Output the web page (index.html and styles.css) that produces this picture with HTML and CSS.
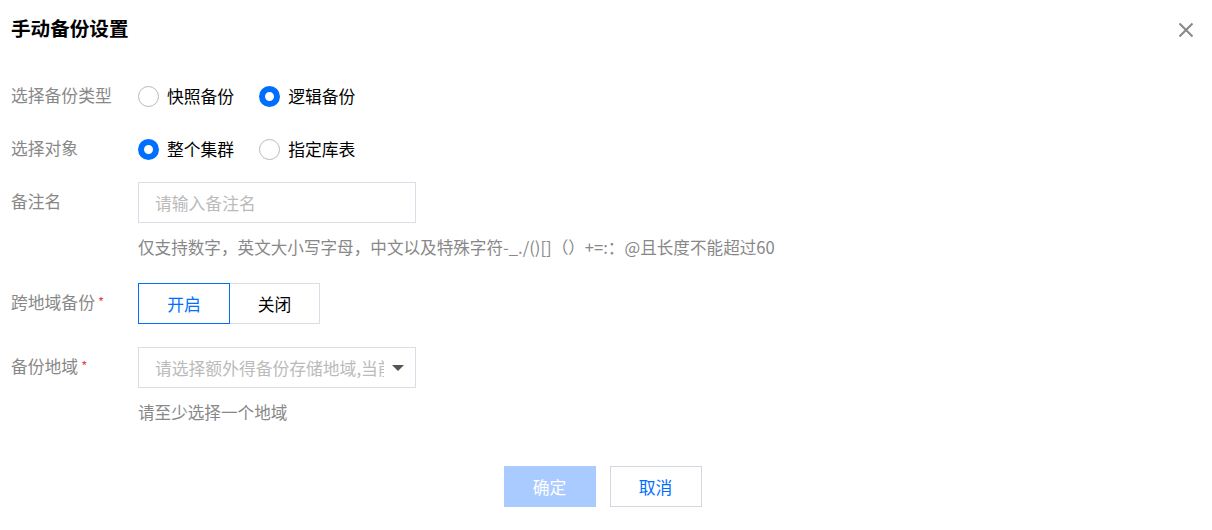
FILE: index.html
```html
<!DOCTYPE html>
<html lang="zh-CN">
<head>
<meta charset="utf-8">
<title>手动备份设置</title>
<link rel="stylesheet" href="styles.css">
</head>
<body>
<div class="dialog">
  <div class="header">
    <h1 class="title">手动备份设置</h1>
    <button class="close" aria-label="关闭">
      <svg width="16" height="16" viewBox="0 0 16 16"><path d="M1.5 1.5 L14.5 14.5 M14.5 1.5 L1.5 14.5" stroke="#888" stroke-width="2" fill="none"/></svg>
    </button>
  </div>
  <div class="form">
    <div class="item">
      <div class="label">选择备份类型</div>
      <div class="control">
        <label class="radio"><span class="dot"></span><span class="rtext">快照备份</span></label>
        <label class="radio checked"><span class="dot"></span><span class="rtext">逻辑备份</span></label>
      </div>
    </div>
    <div class="item">
      <div class="label">选择对象</div>
      <div class="control">
        <label class="radio checked"><span class="dot"></span><span class="rtext">整个集群</span></label>
        <label class="radio"><span class="dot"></span><span class="rtext">指定库表</span></label>
      </div>
    </div>
    <div class="item item-help item-gap">
      <div class="label">备注名</div>
      <div class="col">
        <div class="control">
          <div class="input"><span class="placeholder">请输入备注名</span></div>
        </div>
        <div class="help">仅支持数字，英文大小写字母，中文以及特殊字符-_./()[]（）+=:：@且长度不能超过60</div>
      </div>
    </div>
    <div class="item item-seg">
      <div class="label">跨地域备份<span class="req">*</span></div>
      <div class="control">
        <div class="seg">
          <span class="seg-btn active">开启</span>
          <span class="seg-btn">关闭</span>
        </div>
      </div>
    </div>
    <div class="item item-help item-last">
      <div class="label">备份地域<span class="req">*</span></div>
      <div class="col">
        <div class="control">
          <div class="select"><span class="placeholder clip">请选择额外得备份存储地域,当前地域</span><span class="caret"></span></div>
        </div>
        <div class="help">请至少选择一个地域</div>
      </div>
    </div>
  </div>
  <div class="footer">
    <button class="btn primary disabled">确定</button>
    <button class="btn">取消</button>
  </div>
</div>
</body>
</html>
```

FILE: styles.css
```css
* { box-sizing: border-box; }
html, body {
  margin: 0;
  padding: 0;
  background: #fff;
}
body {
  font-family: "Noto Sans CJK SC", "Noto Sans", sans-serif;
  font-size: 16.8px;
  color: #000;
}
.dialog {
  width: 1212px;
  height: 530px;
  padding: 0 0 0 11px;
}
.header {
  height: 76px;
  display: flex;
  align-items: flex-start;
  justify-content: space-between;
}
.title {
  margin: 0;
  margin-top: 14px;
  font-size: 19.6px;
  line-height: 28px;
  font-weight: 700;
  color: #000;
}
.close {
  border: 0;
  background: none;
  padding: 0;
  margin: 22px 18px 0 0;
  width: 16px;
  height: 16px;
  display: block;
}
.close svg { display: block; }
.form {
  display: flex;
  flex-direction: column;
}
.item {
  display: flex;
  align-items: flex-start;
  margin-bottom: 12px;
}
.item-gap { margin-bottom: 24px; }
.item-seg { margin-bottom: 23px; }
.item-last { margin-bottom: 0; }
.label {
  width: 127px;
  flex: none;
  height: 41px;
  line-height: 39px;
  color: #888;
  white-space: nowrap;
}
.req {
  color: #e54545;
  font-size: 13px;
  margin-left: 3px;
  position: relative;
  top: -2px;
}
.col { display: flex; flex-direction: column; }
.control {
  display: flex;
  align-items: center;
  height: 41px;
}
.radio {
  display: flex;
  align-items: center;
  margin-right: 25px;
  color: #000;
  cursor: pointer;
}
.rtext { position: relative; top: -1px; }
.radio .dot {
  width: 21px;
  height: 21px;
  border-radius: 50%;
  border: 1px solid #b9b9b9;
  background: #fff;
  margin-right: 8px;
  flex: none;
}
.radio.checked .dot {
  border: 6.5px solid #006eff;
}
.input, .select {
  width: 278px;
  height: 41px;
  border: 1px solid #d9dde5;
  background: #fff;
  display: flex;
  align-items: center;
  padding-left: 16px;
}
.placeholder { color: #bbb; white-space: nowrap; }
.select { padding-right: 11px; }
.clip {
  flex: 1;
  overflow: hidden;
  min-width: 0;
  margin-right: 8px;
}
.caret {
  flex: none;
  width: 0;
  height: 0;
  border-left: 6px solid transparent;
  border-right: 6px solid transparent;
  border-top: 6px solid #555;
}
.help {
  margin-top: 12px;
  line-height: 24px;
  height: 24px;
  font-size: 16.6px;
  color: #888;
  white-space: nowrap;
}
.seg {
  display: flex;
  height: 41px;
}
.seg-btn {
  height: 41px;
  width: 91px;
  display: flex;
  align-items: center;
  justify-content: center;
  border: 1px solid #d9dde5;
  color: #000;
}
.seg-btn + .seg-btn { border-left: 0; width: 90px; }
.seg-btn.active {
  border: 1px solid #006eff;
  color: #006eff;
  width: 92px;
}
.footer {
  margin-top: 42px;
  display: flex;
  justify-content: center;
  gap: 14px;
  padding-right: 18px;
}
.btn {
  font-family: inherit;
  font-size: 16.8px;
  width: 92px;
  height: 41px;
  border: 1px solid #d3d8e0;
  background: #fff;
  color: #006eff;
  padding: 0;
}
.btn.primary {
  border-color: #aacbff;
  background: #aacbff;
  color: #fff;
}
```
